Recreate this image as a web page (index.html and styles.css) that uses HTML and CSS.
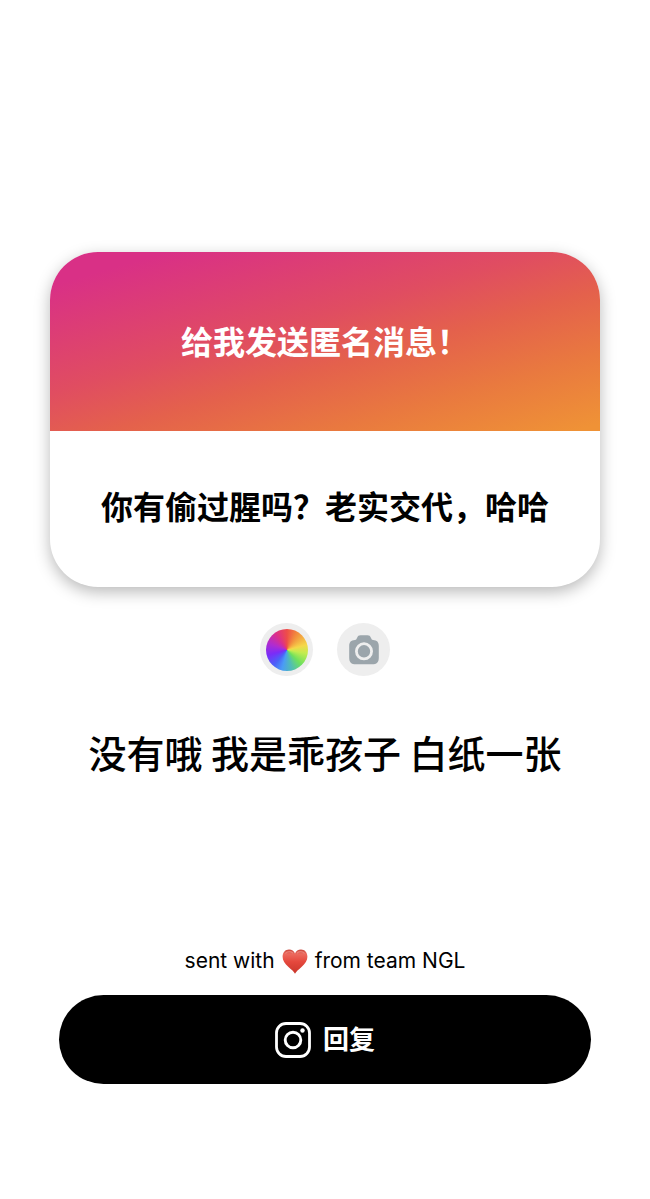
FILE: index.html
```
<!DOCTYPE html>
<html lang="zh-CN">
<head>
<meta charset="utf-8">
<meta name="viewport" content="width=device-width, initial-scale=1">
<title>NGL</title>
<link rel="stylesheet" href="styles.css">
</head>
<body>
<main class="story">
  <article class="card">
    <h1 class="card-title">给我发送匿名消息！</h1>
    <p class="card-question">你有偷过腥吗？老实交代，哈哈</p>
  </article>
  <div class="tools">
    <button class="tool" type="button" aria-label="颜色"><span class="wheel"></span></button>
    <button class="tool" type="button" aria-label="相机">
      <svg class="camera" viewBox="0 0 30 30" aria-hidden="true">
        <path fill="#9ba5ab" d="M6 5 C7.200 4.900 7.400 4.300 8 3 C8.800 1 9.700 .3 11.500 .3 H18.500 C20.300 .3 21.200 1 22 3 C22.600 4.300 22.800 4.900 24 5 C28 5.200 29.800 7 29.800 11 V22.500 C29.800 27.500 27.800 29.300 23 29.300 H7 C2.200 29.300 .2 27.500 .2 22.500 V11 C.2 7 2 5.200 6 5 Z"/>
        <circle cx="15" cy="16.300" r="7.600" fill="none" stroke="#eee" stroke-width="2.800"/>
      </svg>
    </button>
  </div>
  <p class="answer">没有哦 我是乖孩子 白纸一张</p>
  <footer class="footer">
    <p class="credit">
      <span>sent with</span>
      <svg class="heart" viewBox="0 0 26 25" role="img" aria-label="love">
        <defs>
          <linearGradient id="heart-fill" x1="0" y1="0" x2="0" y2="1">
            <stop offset="0" stop-color="#c9463b"/>
            <stop offset=".18" stop-color="#ec6a5e"/>
            <stop offset=".5" stop-color="#e5483d"/>
            <stop offset="1" stop-color="#c9362b"/>
          </linearGradient>
        </defs>
        <path fill="url(#heart-fill)" d="M13 24.800 C12 22.600 9.500 20.800 6.500 18 C2.800 14.600 .6 11.800 .6 7.800 C.6 3.400 3.400 .6 7 .6 C9.800 .6 12 2 13 4.400 C14 2 16.200 .6 19 .6 C22.600 .6 25.400 3.400 25.400 7.800 C25.400 11.800 23.200 14.600 19.500 18 C16.500 20.800 14 22.600 13 24.800 Z"/>
        <path fill="none" stroke="#f6a29a" stroke-width="1.200" stroke-linecap="round" opacity=".5" d="M3.800 4.200 C5.500 2.200 8.800 2.200 10.500 3.800 M15.500 3.800 C17.200 2.200 20.500 2.200 22.200 4.200"/>
      </svg>
      <span>from team NGL</span>
    </p>
    <button class="reply" type="button">
      <svg class="instagram" viewBox="0 0 36 36" fill="none" stroke="#fff" aria-hidden="true">
        <rect x="1.500" y="1.500" width="33" height="33" rx="9.500" stroke-width="2.800"/>
        <circle cx="18" cy="18" r="7.800" stroke-width="2.900"/>
        <circle cx="27.500" cy="8.500" r="2.200" fill="#fff" stroke="none"/>
      </svg>
      <span class="reply-label">回复</span>
    </button>
  </footer>
</main>
</body>
</html>
```
FILE: styles.css
```
* {
  box-sizing: border-box;
}

body {
  margin: 0;
  background: #fff;
  color: #000;
  font-family: "Noto Sans CJK SC", sans-serif;
}

h1,
p {
  margin: 0;
}

button {
  border: 0;
  padding: 0;
  font: inherit;
}

.story {
  display: flex;
  flex-direction: column;
  min-height: 100vh;
  padding: 252px 50px 115px;
}

.card {
  overflow: hidden;
  border-radius: 48px;
  background: #fff;
  box-shadow: 0 5px 16px rgba(0, 0, 0, 0.28);
  text-align: center;
}

.card-title {
  padding: 64px 24px 67px;
  background: linear-gradient(164deg, #d93086 10%, #e04d61 42%, #e4614c 58%, #e9793f 77%, #ef9236 98%);
  color: #fff;
  font-size: 32px;
  font-weight: 700;
  line-height: 48px;
}

.card-question {
  padding: 50px 24px 58px;
  font-size: 32px;
  font-weight: 700;
  line-height: 48px;
}

.tools {
  display: flex;
  justify-content: center;
  gap: 24px;
  margin-top: 36px;
}

.tool {
  display: grid;
  place-items: center;
  width: 53px;
  height: 53px;
  border-radius: 50%;
  background: #eee;
}

.wheel {
  width: 42px;
  height: 42px;
  border-radius: 50%;
  background: conic-gradient(#ee4d48, #f28a3d 30deg, #f5d84a 75deg, #c3ec50 100deg, #6fe05e 135deg, #50bdb4 165deg, #4a9cf5 195deg, #4a62f8 220deg, #7a2cf8 255deg, #b02cd0 290deg, #dc2f8a 325deg, #ee4d48);
}

.camera {
  width: 30px;
  height: 30px;
}

.answer {
  margin-top: 48px;
  font-size: 38px;
  font-weight: 500;
  line-height: 56px;
  text-align: center;
}

.footer {
  display: flex;
  flex-direction: column;
  gap: 19px;
  margin-top: auto;
  padding: 0 9px;
}

.credit {
  display: flex;
  justify-content: center;
  align-items: center;
  gap: 7px;
  font-family: Inter, sans-serif;
  font-size: 21px;
  line-height: 30px;
}

.heart {
  width: 26px;
  height: 25px;
}

.reply {
  display: flex;
  justify-content: center;
  align-items: center;
  gap: 12px;
  height: 89px;
  border-radius: 45px;
  background: #000;
  color: #fff;
  font-size: 26px;
  font-weight: 700;
}

.reply-label {
  padding-bottom: 4px;
}

.instagram {
  width: 36px;
  height: 36px;
}
```
